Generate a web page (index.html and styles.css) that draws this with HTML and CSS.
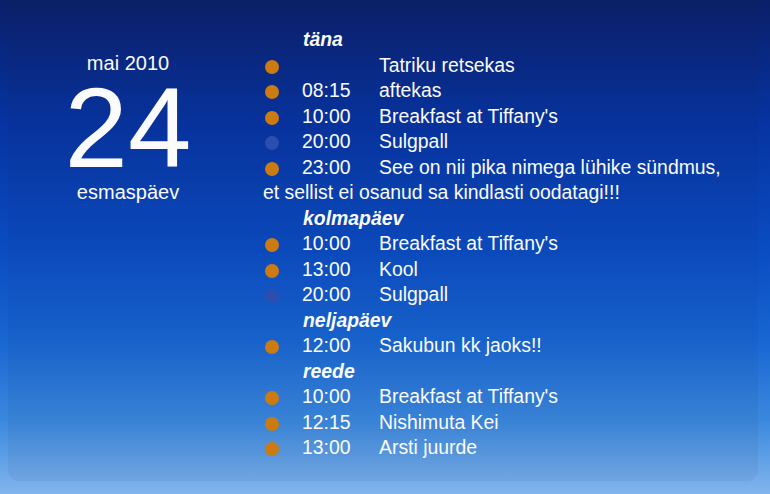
FILE: index.html
```html
<!DOCTYPE html>
<html>
<head>
<meta charset="utf-8">
<link rel="stylesheet" href="styles.css">
</head>
<body>
<div class="panel">
  <div class="date">
    <div class="month">mai 2010</div>
    <div class="day">24</div>
    <div class="weekday">esmaspäev</div>
  </div>
  <div class="agenda">
    <div class="head">täna</div>
    <div class="ev"><span class="dot o"></span><span class="time"></span>Tatriku retsekas</div>
    <div class="ev"><span class="dot o"></span><span class="time">08:15</span>aftekas</div>
    <div class="ev"><span class="dot o"></span><span class="time">10:00</span>Breakfast at Tiffany's</div>
    <div class="ev"><span class="dot b"></span><span class="time">20:00</span>Sulgpall</div>
    <div class="ev"><span class="dot o"></span><span class="time">23:00</span>See on nii pika nimega lühike sündmus, et sellist ei osanud sa kindlasti oodatagi!!!</div>
    <div class="head">kolmapäev</div>
    <div class="ev"><span class="dot o"></span><span class="time">10:00</span>Breakfast at Tiffany's</div>
    <div class="ev"><span class="dot o"></span><span class="time">13:00</span>Kool</div>
    <div class="ev"><span class="dot b"></span><span class="time">20:00</span>Sulgpall</div>
    <div class="head">neljapäev</div>
    <div class="ev"><span class="dot o"></span><span class="time">12:00</span>Sakubun kk jaoks!!</div>
    <div class="head">reede</div>
    <div class="ev"><span class="dot o"></span><span class="time">10:00</span>Breakfast at Tiffany's</div>
    <div class="ev"><span class="dot o"></span><span class="time">12:15</span>Nishimuta Kei</div>
    <div class="ev"><span class="dot o"></span><span class="time">13:00</span>Arsti juurde</div>
  </div>
</div>
</body>
</html>
```
FILE: styles.css
```css
html, body {
  margin: 0;
  padding: 0;
  height: 494px;
  overflow: hidden;
}
body {
  background: linear-gradient(to bottom,
    #0a1f68 0px,
    #0633a0 120px,
    #0a4cc2 250px,
    #1766d2 340px,
    #3a88de 420px,
    #82b6ec 494px);
  font-family: "Liberation Sans", Arial, sans-serif;
  color: #fbfbfb;
}
.panel {
  display: flex;
  height: 481px;
  margin: 0 12px 0 8px;
  border-radius: 0 0 11px 11px;
  background: rgba(30, 40, 90, 0.06);
}
.date {
  width: 240px;
  flex: none;
  padding-top: 51px;
  text-align: center;
}
.month, .weekday {
  font-size: 20px;
  line-height: 24px;
}
.weekday {
  margin-top: -1px;
}
.day {
  font-size: 114px;
  line-height: 106px;
}
.agenda {
  margin-left: 15px;
  width: 470px;
  padding-top: 27px;
  font-size: 19.4px;
  line-height: 25.5px;
}
.head {
  padding-left: 40px;
  font-weight: bold;
  font-style: italic;
}
.dot {
  display: inline-block;
  width: 14px;
  height: 14px;
  border-radius: 50%;
  margin-left: 2px;
  margin-right: 23px;
  vertical-align: -2px;
}
.dot.o { background: #cc7a12; }
.dot.b { background: #2c4fae; }
.time {
  display: inline-block;
  width: 77px;
}
```
